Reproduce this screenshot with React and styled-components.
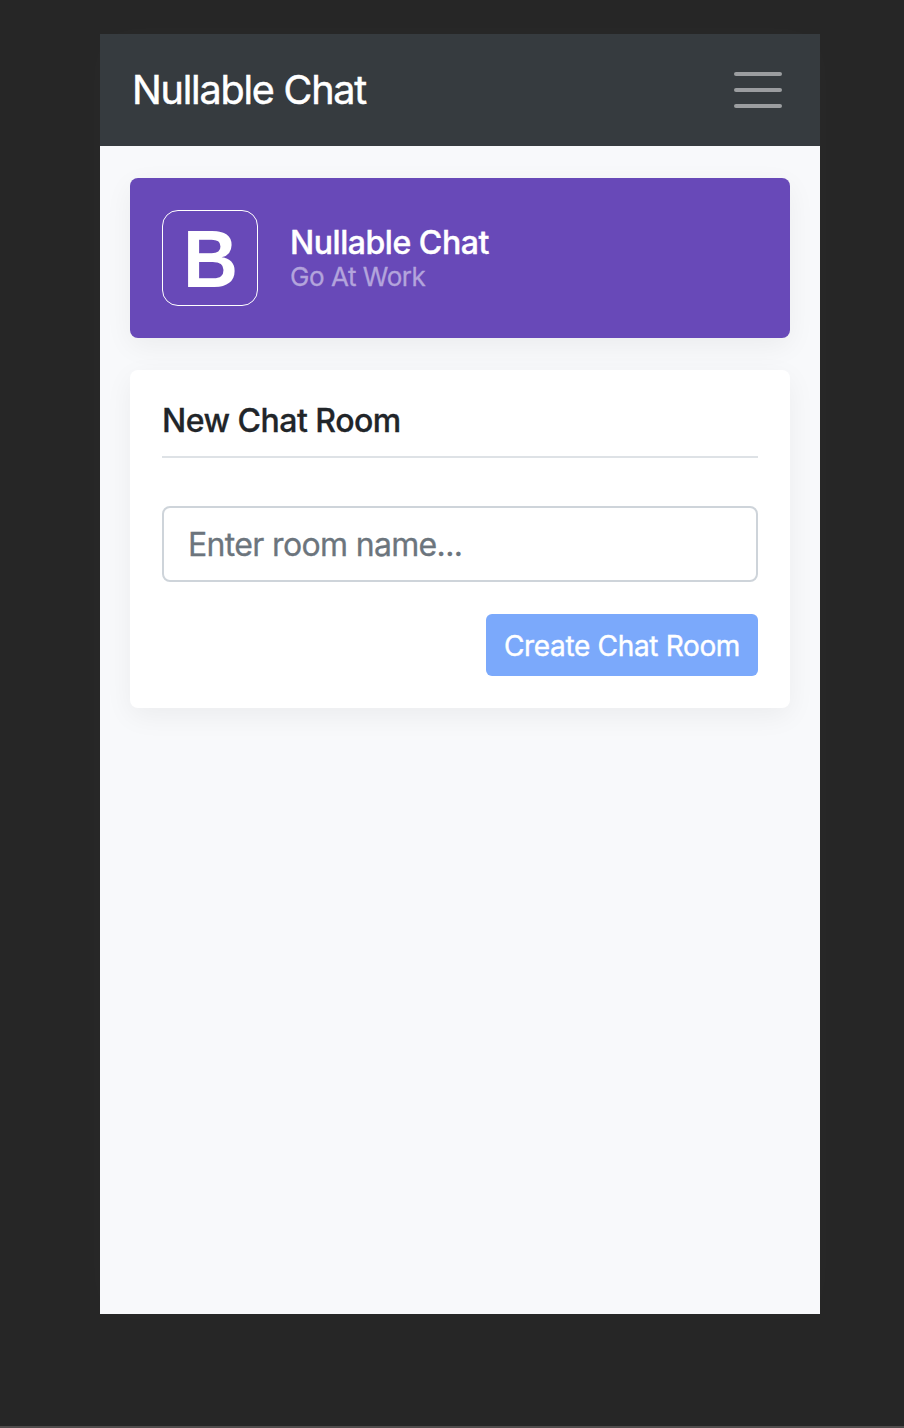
import React from "react";
import styled, { createGlobalStyle } from "styled-components";

const GlobalStyle = createGlobalStyle`
  *, *::before, *::after { box-sizing: border-box; }
  body {
    margin: 0;
    background: #262626;
    font-family: Inter, "Liberation Sans", sans-serif;
  }
`;

const Stage = styled.div`
  height: 1428px;
  padding: 34px 84px 0 100px;
  border-bottom: 2px solid #504c4c;
  overflow: hidden;
`;

const Phone = styled.main`
  width: 720px;
  height: 1280px;
  background: #f8f9fb;
  box-shadow: 0 0 40px rgba(255, 255, 255, 0.02);
`;

const Navbar = styled.header`
  display: flex;
  align-items: center;
  justify-content: space-between;
  height: 112px;
  padding: 0 38px 0 32px;
  background: #363b3f;
`;

const Brand = styled.span`
  color: #fff;
  font-size: 39.5px;
  font-weight: 400;
  line-height: 60px;
  letter-spacing: -1.2px;
  white-space: nowrap;
  -webkit-text-stroke: 0.5px currentColor;
`;

const MenuButton = styled.button`
  display: flex;
  flex-direction: column;
  gap: 12px;
  padding: 0;
  border: 0;
  background: none;
`;

const MenuBar = styled.span`
  width: 48px;
  height: 4px;
  border-radius: 2px;
  background: #9b9da0;
`;

const Content = styled.div`
  display: flex;
  flex-direction: column;
  gap: 32px;
  padding: 32px 30px;
`;

const Panel = styled.section`
  border-radius: 8px;
  padding: 32px;
  box-shadow: 0 8px 28px rgba(0, 0, 0, 0.055);
`;

const Banner = styled(Panel)`
  display: flex;
  align-items: center;
  gap: 32px;
  height: 160px;
  background: #6849b8;
`;

const Logo = styled.div`
  display: flex;
  align-items: center;
  justify-content: center;
  width: 96px;
  height: 96px;
  border: 1px solid #fff;
  border-radius: 16px;
  color: #fff;
`;

const LogoLetter = styled.span`
  font: bold 81px/94px "Liberation Sans", sans-serif;
  transform: translate(0.3px, 0.5px) scaleX(0.94);
`;

const BannerText = styled.div`
  display: flex;
  flex-direction: column;
  padding-top: 6px;
`;

const BannerTitle = styled.h1`
  margin: 0;
  color: #fff;
  font-size: 32px;
  font-weight: 500;
  line-height: 32px;
  letter-spacing: -0.45px;
  -webkit-text-stroke: 0.4px currentColor;
`;

const BannerSubtitle = styled.span`
  color: #b3a4dc;
  font-size: 26px;
  line-height: 36px;
  letter-spacing: -0.45px;
  -webkit-text-stroke: 0.3px currentColor;
`;

const RoomForm = styled(Panel)`
  display: flex;
  flex-direction: column;
  height: 338px;
  background: #fff;
`;

const FormTitle = styled.h2`
  margin: 0 0 48px;
  height: 56px;
  border-bottom: 2px solid #dee2e6;
  color: #212529;
  font-size: 32px;
  font-weight: 500;
  line-height: 38px;
  letter-spacing: -0.5px;
  -webkit-text-stroke: 0.3px currentColor;
`;

const RoomInput = styled.input`
  width: 100%;
  height: 76px;
  padding: 0 24px;
  border: 2px solid #ced4da;
  border-radius: 8px;
  background: #fff;
  font: 400 32px Inter, sans-serif;
  letter-spacing: -0.66px;

  &::placeholder {
    color: #6c757d;
    opacity: 1;
    -webkit-text-stroke: 0.3px currentColor;
  }
`;

const CreateButton = styled.button`
  align-self: flex-end;
  width: 272px;
  height: 62px;
  margin-top: 32px;
  padding: 2px 0 0;
  border: 0;
  border-radius: 6px;
  background: #7ba9fb;
  color: #fff;
  font: 400 28px Inter, sans-serif;
  letter-spacing: -0.33px;
  white-space: nowrap;
  -webkit-text-stroke: 0.4px currentColor;
`;

export default function App() {
  return (
    <>
      <GlobalStyle />
      <Stage>
        <Phone>
          <Navbar>
            <Brand>Nullable Chat</Brand>
            <MenuButton aria-label="Toggle navigation">
              <MenuBar />
              <MenuBar />
              <MenuBar />
            </MenuButton>
          </Navbar>
          <Content>
            <Banner>
              <Logo>
                <LogoLetter>B</LogoLetter>
              </Logo>
              <BannerText>
                <BannerTitle>Nullable Chat</BannerTitle>
                <BannerSubtitle>Go At Work</BannerSubtitle>
              </BannerText>
            </Banner>
            <RoomForm as="form">
              <FormTitle>New Chat Room</FormTitle>
              <RoomInput placeholder="Enter room name..." />
              <CreateButton type="button">Create Chat Room</CreateButton>
            </RoomForm>
          </Content>
        </Phone>
      </Stage>
    </>
  );
}
